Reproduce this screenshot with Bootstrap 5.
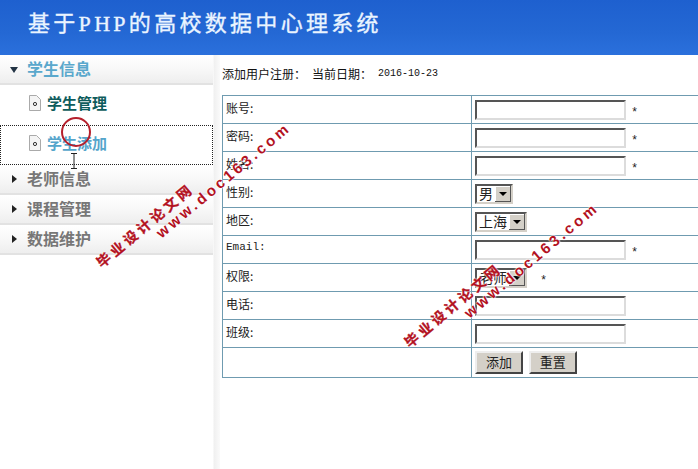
<!DOCTYPE html>
<html lang="zh">
<head>
<meta charset="utf-8">
<title>基于PHP的高校数据中心理系统</title>
<link rel="stylesheet" href="https://cdn.jsdelivr.net/npm/bootstrap@5.3.0/dist/css/bootstrap.min.css">
<style>
html,body{height:469px;overflow:hidden;background:#fff}
body{font-family:"Liberation Serif","Noto Sans CJK SC",serif;font-size:12px;color:#222;position:relative}
.top-band{height:55px;background:linear-gradient(#1e60cf,#2468d4 60%,#2b70dc);color:#eaf4ff;padding-left:28px}
.top-title{font-size:22px;letter-spacing:3.3px;line-height:48px;margin:0;font-weight:400;-webkit-text-stroke:.35px #eaf4ff;font-family:"Liberation Serif","Noto Sans CJK SC",serif}
.page-body{height:414px}
.side-nav{width:220px;flex:none;background:linear-gradient(90deg,#fff 213px,#f0f0f0 214px,#fafafa 220px)}
.side-head{height:30px;width:213px;background:linear-gradient(#fff,#f8f8f8 50%,#eeeeee);border-bottom:2px solid #e2e2e2;padding-left:27px;font-size:16px;font-weight:700;color:#777;position:relative;font-family:"Noto Sans CJK SC",sans-serif;line-height:27px}
.side-head.is-open{color:#5aa8cc}
.side-arrow{position:absolute;left:12px;top:10px;width:0;height:0;border-style:solid;border-width:4px 0 4px 5px;border-color:transparent transparent transparent #222}
.is-open .side-arrow{left:10px;top:12px;border-width:6px 4.5px 0 4.5px;border-color:#234 transparent transparent transparent}
.side-item{height:40px;width:213px;padding-left:29px;padding-bottom:4px;font-size:15px;font-weight:700;color:#0e5c5c;font-family:"Noto Sans CJK SC",sans-serif;gap:6px}
.side-item.is-current{color:#55a5cb;outline:1px dotted #222;outline-offset:-1px}
.side-item svg{flex:none}
.main-pane{padding:10px 0 0 2px;min-width:0;overflow:hidden;flex:1}
.crumb-line{height:18px;font-size:12px;line-height:18px;margin-bottom:12px;gap:6px;color:#111;font-family:"Noto Sans CJK SC",sans-serif}
.crumb-date{font-family:"Liberation Mono",monospace;font-size:10px;margin-left:0}
.reg-table{width:520px;margin:0;border-collapse:collapse;table-layout:fixed}
.reg-table td{border:1px solid #6f9bb0;height:28px;padding:0 3px;vertical-align:middle;font-size:12px;font-family:"Noto Sans CJK SC",sans-serif;color:#222;line-height:1}
.reg-table td.cell-name{padding-bottom:4px}
.reg-table tr:last-child td{height:30px}
.col-label{width:249px}
.reg-table td.mono-label{font-family:"Liberation Mono",monospace;font-size:11px}
.old-input{width:151px;height:20px;border:2px solid;border-color:#555 #dcdcdc #dcdcdc #555;background:#fff;padding:0;vertical-align:middle;border-radius:0}
.req-mark{font-family:"Liberation Mono",monospace;margin-left:5px;font-size:12px;vertical-align:-3px}
.req-gap{margin-left:13px}
.old-select{appearance:none;height:20px;border:2px solid;border-color:#555 #d4d0c8 #d4d0c8 #555;border-radius:0;padding:0 18px 0 2px;font-size:14px;line-height:15px;font-family:"Noto Sans CJK SC",sans-serif;color:#222;vertical-align:middle;background-color:#fff;background-image:url("data:image/svg+xml,%3Csvg xmlns='http://www.w3.org/2000/svg' width='16' height='16'%3E%3Crect width='16' height='16' fill='%23d4d0c8'/%3E%3Cpath d='M0 0H16M0 0V16' stroke='%23fff' stroke-width='2'/%3E%3Cpath d='M16 0V16H0' fill='none' stroke='%23555' stroke-width='2'/%3E%3Cpath d='M4 6h8l-4 4z' fill='%23000'/%3E%3C/svg%3E");background-repeat:no-repeat;background-position:right center}
.old-btn{width:48px;height:23px;background:#d4d0c8;border:2px solid;border-color:#eee #444 #444 #eee;border-radius:0;font-size:13px;padding:0 0 2px;color:#222;line-height:1;font-family:"Noto Sans CJK SC",sans-serif}
.old-btn+.old-btn{margin-left:3px}
.stamp{position:absolute;transform-origin:left center;transform:rotate(-40deg);white-space:nowrap;color:#b3121f;font-weight:700;font-family:"Noto Sans CJK SC",sans-serif;text-shadow:0 0 2px #fff,0 0 2px #fff,0 0 1px #fff;line-height:1;pointer-events:none}
.stamp-cn{font-size:14px;letter-spacing:3.4px;-webkit-text-stroke:.3px #b3121f}
.stamp-en{font-size:15px;letter-spacing:3.2px;font-family:"Liberation Sans",sans-serif}
.s1{left:98px;top:257px}.s2{left:158px;top:227px}.s3{left:406px;top:337px}.s4{left:466px;top:307px}
.click-ring{position:absolute;left:61px;top:117px;width:30px;height:30px;border:2px solid #b5202c;border-radius:50%}
.text-cursor{position:absolute;left:70px;top:153px}
</style>
</head>
<body>
<header class="top-band d-flex align-items-start">
  <h1 class="top-title">基于PHP的高校数据中心理系统</h1>
</header>
<div class="page-body d-flex">
  <nav class="side-nav">
    <div class="side-head is-open"><span class="side-arrow"></span>学生信息</div>
    <div class="side-item d-flex align-items-center">
      <svg width="12" height="16" viewBox="0 0 12 16"><path d="M.5.5h7l4 4v11H.5z" fill="#f4f4f4" stroke="#aaa"/><circle cx="6" cy="9" r="1.6" fill="none" stroke="#333"/></svg>
      学生管理
    </div>
    <div class="side-item is-current d-flex align-items-center">
      <svg width="12" height="16" viewBox="0 0 12 16"><path d="M.5.5h7l4 4v11H.5z" fill="#f4f4f4" stroke="#aaa"/><circle cx="6" cy="9" r="1.6" fill="none" stroke="#333"/></svg>
      学生添加
    </div>
    <div class="side-head"><span class="side-arrow"></span>老师信息</div>
    <div class="side-head"><span class="side-arrow"></span>课程管理</div>
    <div class="side-head"><span class="side-arrow"></span>数据维护</div>
  </nav>
  <main class="main-pane">
    <div class="crumb-line d-flex align-items-center"><span>添加用户注册：</span><span>当前日期：</span><span class="crumb-date">2016-10-23</span></div>
    <table class="reg-table">
      <colgroup><col class="col-label"><col></colgroup>
      <tr><td class="cell-name">账号:</td><td><input class="old-input" type="text"><span class="req-mark">*</span></td></tr>
      <tr><td class="cell-name">密码:</td><td><input class="old-input" type="text"><span class="req-mark">*</span></td></tr>
      <tr><td class="cell-name">姓名:</td><td><input class="old-input" type="text"><span class="req-mark">*</span></td></tr>
      <tr><td class="cell-name">性别:</td><td><select class="old-select"><option>男</option></select></td></tr>
      <tr><td class="cell-name">地区:</td><td><select class="old-select"><option>上海</option></select></td></tr>
      <tr><td class="cell-name mono-label">Email:</td><td><input class="old-input" type="text"><span class="req-mark">*</span></td></tr>
      <tr><td class="cell-name">权限:</td><td><select class="old-select"><option>老师</option></select><span class="req-mark req-gap">*</span></td></tr>
      <tr><td class="cell-name">电话:</td><td><input class="old-input" type="text"></td></tr>
      <tr><td class="cell-name">班级:</td><td><input class="old-input" type="text"></td></tr>
      <tr><td></td><td><button class="old-btn" type="button">添加</button> <button class="old-btn" type="button">重置</button></td></tr>
    </table>
  </main>
</div>
<div class="click-ring"></div>
<svg class="text-cursor" width="8" height="16" viewBox="0 0 8 16"><path d="M1 .5h6M1 15.5h6M4 .5v15" stroke="#222" fill="none"/></svg>
<div class="stamp stamp-cn s1">毕业设计论文网</div>
<div class="stamp stamp-en s2">www.doc163.com</div>
<div class="stamp stamp-cn s3">毕业设计论文网</div>
<div class="stamp stamp-en s4">www.doc163.com</div>
</body>
</html>
